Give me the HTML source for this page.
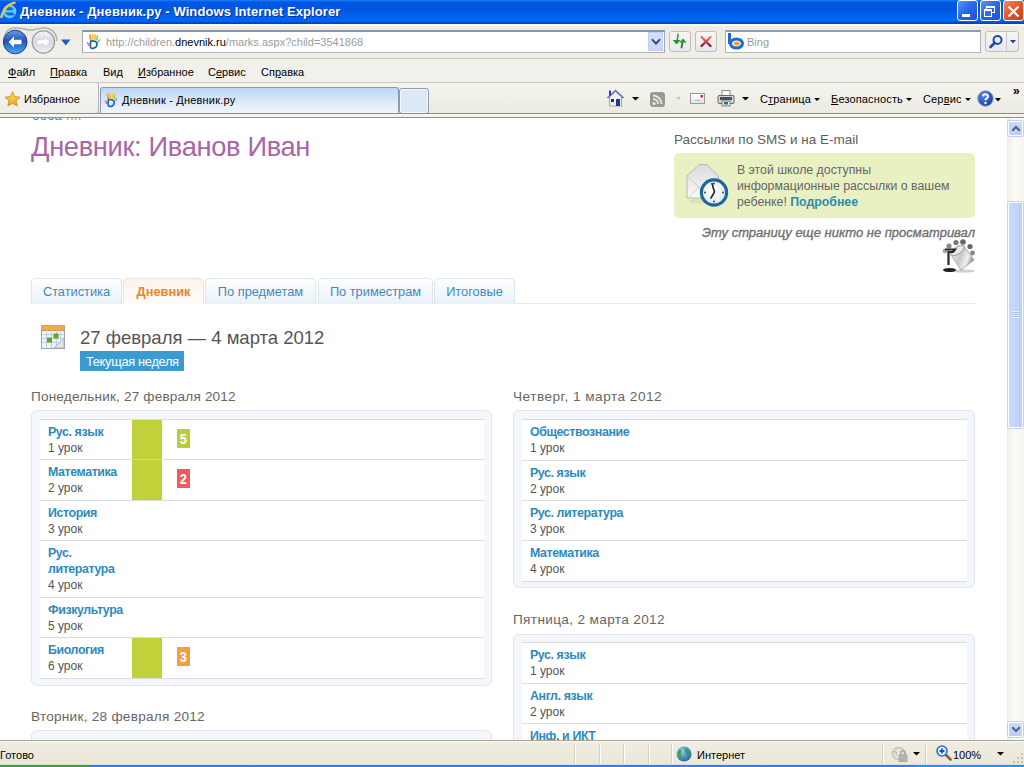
<!DOCTYPE html>
<html><head><meta charset="utf-8">
<style>
*{box-sizing:border-box}
html,body{margin:0;padding:0}
body{width:1024px;height:767px;overflow:hidden;position:relative;background:#fff;font-family:"Liberation Sans",sans-serif}
.a{position:absolute}
/* chrome */
#title{left:0;top:0;width:1024px;height:24px;background:linear-gradient(#0b5ce8,#0a58e6 60%,#0650dc);}
#tt{left:20px;top:4px;color:#fff;font-weight:bold;font-size:13px;white-space:nowrap;text-shadow:1px 1px 0 #0a2a8a}
#addr{left:0;top:24px;width:1024px;height:34px;background:#f4f4f0;border-top:1px solid #d8e4f8}
#menu{left:0;top:58px;width:1024px;height:24px;background:#efede4;border-top:1px solid #c9c7bb}
#tabs{left:0;top:82px;width:1024px;height:36px;background:linear-gradient(#f3f2ea,#ebe9de);border-top:1px solid #d0cec2}
.mi{top:66px;font-size:11px;color:#000;white-space:nowrap}
.u{text-decoration:underline}
.tbtn{top:0;width:21px;height:21px;border:1px solid #fff;border-radius:3px;background:linear-gradient(135deg,#5d96f6,#2b68e8 45%,#1e54d8)}
.sbtn{top:31px;height:21px;border:1px solid #c2c0b6;border-radius:3px;background:linear-gradient(#f6f6f2,#e6e8ee)}
.cm{top:93px;font-size:11px;white-space:nowrap;letter-spacing:0.15px}
.st{top:749px;font-size:11px;white-space:nowrap}
.vsep{top:744px;width:2px;height:20px;border-left:1px solid #d6d2bf;border-right:1px solid #fff}
.sarr{width:15px;height:15px;border:1px solid #fff;border-radius:2px;background:linear-gradient(#cad9fc,#bccdf8);box-shadow:0 0 0 1px #c2d0f0}
#status{left:0;top:740px;width:1024px;height:27px;background:#ece9d8;border-top:1px solid #aca899}
#content{left:0;top:118px;width:1007px;height:622px;background:#fff;overflow:hidden}
#sb{left:1007px;top:118px;width:17px;height:622px;background:#f7f6f1;border-left:1px solid #eeede5}
.lnk{color:#2a8cb2;font-weight:bold}
.gr{color:#5a5a5a}
.tab{top:278px;height:26px;border:1px solid #dbe6ee;border-bottom:none;border-radius:5px 5px 0 0;background:linear-gradient(#fdfeff,#e9f2f8);color:#4289bb;font-size:12.8px;text-align:center;line-height:26px;white-space:nowrap}
.tab.act{background:linear-gradient(#fdf2ea,#fffbf8);border-color:#f0e3da;color:#e8862c;font-weight:bold}
.dh{font-size:13.6px;color:#666;white-space:nowrap;letter-spacing:0.25px}
.pnl{background:#f3f6fa;border:1px solid #e1e6ee;border-radius:6px}
.sep{height:1px;background:#dcdcdc}
.gcol{width:30px;background:#c1d13a}
.badge{width:13px;height:19px;color:#fff;font-weight:bold;font-size:15.5px;line-height:20px;text-align:center;letter-spacing:0}
.badge span{display:inline-block;transform:scaleX(0.82)}
.subj{color:#2d8bbb;font-weight:bold;font-size:12.4px;letter-spacing:-0.4px;white-space:nowrap}
.les{color:#555;font-size:12px;white-space:nowrap}
</style></head><body>

<!--CHROME-->
<!-- title bar -->
<div class="a" style="left:0;top:0;width:1024px;height:24px;background:linear-gradient(#1a82fa 0,#0058e4 2px,#0055e0 9px,#0062ee 16px,#0066f2 21px,#0048cc 23px,#003cb8 24px)"></div>
<svg class="a" style="left:0;top:0" width="18" height="22" viewBox="0 0 18 22">
  <circle cx="9.5" cy="11.3" r="5.6" fill="#1a70c8" stroke="#5ccaf8" stroke-width="2.6"/>
  <path d="M4.5 11.3h10" stroke="#5ccaf8" stroke-width="2.2"/>
  <path d="M10 14.5h4.5" stroke="#0a5ae6" stroke-width="1.4"/>
  <path d="M1.2 18 C2.5 10 8.5 3 15.5 2.6" fill="none" stroke="#e6c650" stroke-width="2.4"/>
</svg>
<div class="a" style="left:20px;top:4px;color:#fff;font-weight:bold;font-size:13px;letter-spacing:0.1px;white-space:nowrap;text-shadow:1px 1px 0 #0b2f9a">Дневник - Дневник.ру - Windows Internet Explorer</div>
<!-- title buttons -->
<div class="a tbtn" style="left:957px"><div class="a" style="left:4px;top:13px;width:8px;height:3px;background:#fff"></div></div>
<div class="a tbtn" style="left:980px">
  <div class="a" style="left:5px;top:5px;width:9px;height:7px;border:1px solid #fff;border-top-width:2px"></div>
  <div class="a" style="left:3px;top:8px;width:8px;height:8px;border:1px solid #fff;border-top-width:2px;background:#2f6ee8"></div>
</div>
<div class="a tbtn" style="left:1003px;width:21px;background:linear-gradient(135deg,#f08a6a,#e35a30 45%,#c8401c)">
  <svg class="a" style="left:3px;top:4px" width="13" height="13"><path d="M1.5 1.5L11.5 11.5M11.5 1.5L1.5 11.5" stroke="#fff" stroke-width="2.2"/></svg>
</div>

<!-- address row -->
<div class="a" style="left:0;top:24px;width:1024px;height:34px;background:linear-gradient(#f6fafe 0,#f6fafe 1.5px,#efebe2 2.5px,#eeebe3 6px,#f0efe9 28px,#eeede7 34px)"></div>

<svg class="a" style="left:2px;top:26px" width="58" height="31" viewBox="0 0 58 31">
  <defs>
    <linearGradient id="gb" x1="0" y1="0" x2="0" y2="1"><stop offset="0" stop-color="#6a9be8"/><stop offset="0.45" stop-color="#2452b8"/><stop offset="1" stop-color="#45b0f0"/></linearGradient>
    <linearGradient id="gf" x1="0" y1="0" x2="0" y2="1"><stop offset="0" stop-color="#f4f6f9"/><stop offset="0.5" stop-color="#d4d9e0"/><stop offset="1" stop-color="#eef3f7"/></linearGradient>
  </defs>
  <path d="M2 15 C2 6 7 2 13 2 C20 2 24 4 29 4 C34 4 37 2 42 2 C50 2 55 8 55 15" fill="none" stroke="#b4b4b4" stroke-width="1.6"/>
  <circle cx="13.2" cy="16" r="11.8" fill="url(#gb)" stroke="#1a3f8f" stroke-width="1"/>
  <path d="M6.5 16 L12 10.5 L12 13.8 L19.5 13.8 L19.5 18.2 L12 18.2 L12 21.5 Z" fill="#fff"/>
  <circle cx="41.4" cy="16" r="11.2" fill="url(#gf)" stroke="#9a9a9a" stroke-width="1.2"/>
  <path d="M48 16 L42.5 10.5 L42.5 13.8 L35 13.8 L35 18.2 L42.5 18.2 L42.5 21.5 Z" fill="#fff" stroke="#c8ccd2" stroke-width="0.6"/>
</svg>
<svg class="a" style="left:60px;top:38px" width="12" height="9"><path d="M1 1.5h9.5L5.75 7.5z" fill="#1d5ec8"/></svg>

<div class="a" style="left:82px;top:30px;width:583px;height:23px;background:#fff;border:1px solid #9aaabb;border-top:2px solid #8496ae;border-bottom-color:#b4b4ac"></div>
<svg class="a" style="left:86px;top:33px" width="15" height="17" viewBox="0 0 17 19">
  <path d="M5 7.5 L4.5 2.5" stroke="#f2a040" stroke-width="2.2" stroke-linecap="round"/>
  <path d="M7.5 7 L7.5 1.5" stroke="#f6c840" stroke-width="2.2" stroke-linecap="round"/>
  <path d="M10 7 L10.5 2" stroke="#e8d040" stroke-width="2.2" stroke-linecap="round"/>
  <path d="M12.3 7.5 L13 3.5" stroke="#a8d040" stroke-width="2" stroke-linecap="round"/>
  <path d="M14 10 L15.5 7.5" stroke="#60c0c8" stroke-width="1.8" stroke-linecap="round"/>
  <path d="M1.8 11 L3.2 13.5" stroke="#e070b0" stroke-width="2" stroke-linecap="round"/>
  <path d="M5.5 9 C9 8.5 13 9.5 12.5 13 C12 16.5 8.5 18 6 17 C4 16 5 12 5.5 9 Z" fill="none" stroke="#1f62ad" stroke-width="2"/>
</svg>
<div class="a" style="left:106px;top:36px;font-size:11px;color:#9c9c9c;white-space:nowrap">http://children.<span style="color:#000">dnevnik.ru</span>/marks.aspx?child=3541868</div>
<div class="a" style="left:648px;top:32px;width:15px;height:19px;background:linear-gradient(#d6e0fb,#c8d5f7);border:1px solid #c0cff2"></div>
<svg class="a" style="left:651px;top:38px" width="10" height="8"><path d="M1.5 1.8L5 5.5L8.5 1.8" fill="none" stroke="#34466e" stroke-width="1.9" stroke-linecap="round"/></svg>

<div class="a sbtn" style="left:669px;width:22px"></div>
<svg class="a" style="left:669px;top:30px" width="22" height="22" viewBox="0 0 22 22">
  <path d="M9 4.5 L8.2 10.5" stroke="#4a9a4a" stroke-width="1.8" stroke-linecap="round"/>
  <path d="M3.8 10 L11.5 10 L7.5 14.5 Z" fill="#2f8f2f"/>
  <path d="M12.5 17.5 L13.6 12" stroke="#2a7a2a" stroke-width="1.8" stroke-linecap="round"/>
  <path d="M10 12.5 L17.5 12.5 L14.2 8.5 Z" fill="#2f8f2f"/>
</svg>
<div class="a sbtn" style="left:695px;width:22px"></div>
<svg class="a" style="left:699px;top:35px" width="14" height="13"><defs><linearGradient id="gx" x1="0" y1="0" x2="0" y2="1"><stop offset="0" stop-color="#f07878"/><stop offset="1" stop-color="#8a1a2a"/></linearGradient></defs><path d="M2.5 2L11.5 11M11.5 2L2.5 11" stroke="url(#gx)" stroke-width="2.4" stroke-linecap="round"/></svg>

<div class="a" style="left:725px;top:30px;width:256px;height:23px;background:#fff;border:1px solid #a9b4c2;border-top:2px solid #8f9db0;border-bottom-color:#b8b8b0"></div>
<svg class="a" style="left:727px;top:32px" width="18" height="18" viewBox="0 0 18 18">
  <path d="M2.5 1 V12" stroke="#1a6cd0" stroke-width="3"/>
  <ellipse cx="9.5" cy="11.5" rx="6" ry="4.6" fill="none" stroke="#1a6cd0" stroke-width="3"/>
  <ellipse cx="9.8" cy="11.5" rx="3" ry="2" fill="#f5a020"/>
</svg>
<div class="a" style="left:747px;top:36px;font-size:11px;color:#9a9a9a">Bing</div>
<div class="a sbtn" style="left:985px;width:34px;border-radius:3px"></div>
<div class="a" style="left:1006px;top:32px;width:1px;height:19px;background:#c8c8c0"></div>
<svg class="a" style="left:988px;top:34px" width="16" height="16" viewBox="0 0 16 16"><circle cx="9.5" cy="6" r="4" fill="none" stroke="#1c4ab0" stroke-width="2"/><path d="M6.8 8.8 L2.5 13" stroke="#1c4ab0" stroke-width="2.6" stroke-linecap="round"/></svg>
<svg class="a" style="left:1010px;top:40px" width="6" height="4"><path d="M0 0h6L3 3.5z" fill="#2a3f90"/></svg>

<!-- menu -->
<div class="a" style="left:0;top:58px;width:1024px;height:24px;background:#f1f0ea;border-top:1px solid #c6c4b9"></div>
<div class="a" style="left:0;top:82px;width:1024px;height:1px;background:#cdcbbf"></div>
<div class="a mi" style="left:8px"><span class="u">Ф</span>айл</div>
<div class="a mi" style="left:50px"><span class="u">П</span>равка</div>
<div class="a mi" style="left:103px">Ви<span class="u">д</span></div>
<div class="a mi" style="left:138px"><span class="u">И</span>збранное</div>
<div class="a mi" style="left:208px">С<span class="u">е</span>рвис</div>
<div class="a mi" style="left:261px">Сп<span class="u">р</span>авка</div>

<!-- favorites/tabs -->
<div class="a" style="left:0;top:83px;width:1024px;height:30px;background:linear-gradient(#f4f3ed,#ecebe2)"></div>
<div class="a" style="left:-4px;top:82px;width:103px;height:32px;background:linear-gradient(#f6f6f3,#eeede8);border:1px solid #b7b6ae;border-top-color:#cdcbbf;border-radius:0 3px 3px 0"></div>
<svg class="a" style="left:4px;top:91px" width="17" height="17" viewBox="0 0 17 17">
  <defs><linearGradient id="gs" x1="0" y1="0" x2="0" y2="1"><stop offset="0" stop-color="#ffe27a"/><stop offset="1" stop-color="#f0a010"/></linearGradient></defs>
  <path d="M8.5 0.8 L10.7 5.6 L16 6.2 L12 9.7 L13.2 15 L8.5 12.3 L3.8 15 L5 9.7 L1 6.2 L6.3 5.6 Z" fill="url(#gs)" stroke="#c88a10" stroke-width="0.8"/>
</svg>
<div class="a" style="left:24px;top:93px;font-size:11px;white-space:nowrap">Избранное</div>
<div class="a" style="left:100px;top:87px;width:299px;height:27px;border:1px solid #8c9aab;border-bottom:none;border-radius:3px 3px 0 0;background:linear-gradient(#bcd6f7,#dbe8f8 50%,#f3f6fb)"></div>
<svg class="a" style="left:104px;top:92px" width="14" height="16" viewBox="0 0 17 19">
  <path d="M5 7.5 L4.5 2.5" stroke="#f2a040" stroke-width="2.2" stroke-linecap="round"/>
  <path d="M7.5 7 L7.5 1.5" stroke="#f6c840" stroke-width="2.2" stroke-linecap="round"/>
  <path d="M10 7 L10.5 2" stroke="#e8d040" stroke-width="2.2" stroke-linecap="round"/>
  <path d="M12.3 7.5 L13 3.5" stroke="#a8d040" stroke-width="2" stroke-linecap="round"/>
  <path d="M14 10 L15.5 7.5" stroke="#60c0c8" stroke-width="1.8" stroke-linecap="round"/>
  <path d="M1.8 11 L3.2 13.5" stroke="#e070b0" stroke-width="2" stroke-linecap="round"/>
  <path d="M5.5 9 C9 8.5 13 9.5 12.5 13 C12 16.5 8.5 18 6 17 C4 16 5 12 5.5 9 Z" fill="none" stroke="#1f62ad" stroke-width="2"/>
</svg>
<div class="a" style="left:122px;top:94px;font-size:11px;letter-spacing:0.2px;white-space:nowrap">Дневник - Дневник.ру</div>
<div class="a" style="left:399px;top:88px;width:30px;height:26px;border:1px solid #8c9aab;border-radius:3px;background:#dce8f6;box-shadow:inset 0 0 0 1px #f4f8fc"></div>
<!-- command bar -->
<svg class="a" style="left:606px;top:89px" width="19" height="18" viewBox="0 0 19 18">
  <path d="M1.5 9 L9.5 1.5 L17.5 9" fill="none" stroke="#5a74b8" stroke-width="1.6"/>
  <path d="M3.5 8 L9.5 2.8 L15.5 8 V17 H3.5 Z" fill="#f0f0f4" stroke="#8a90a0" stroke-width="0.8"/>
  <rect x="10" y="10" width="4" height="7" fill="#1e3f88"/>
  <rect x="5" y="10" width="3" height="3" fill="#333"/>
  <rect x="3" y="1.5" width="2" height="5" fill="#3a3ab8"/>
</svg>
<svg class="a" style="left:632px;top:97px" width="7" height="4"><path d="M0 0h7L3.5 3.5z" fill="#000"/></svg>
<div class="a" style="left:650px;top:92px;width:15px;height:15px;background:#9a9a94;border-radius:3px"></div>
<svg class="a" style="left:650px;top:92px" width="15" height="15"><circle cx="4" cy="11.5" r="1.6" fill="#e8e8e4"/><path d="M3 7 A5 5 0 0 1 8 12" fill="none" stroke="#e8e8e4" stroke-width="1.8"/><path d="M3 3.5 A8.5 8.5 0 0 1 11.5 12" fill="none" stroke="#e8e8e4" stroke-width="1.8"/></svg>
<svg class="a" style="left:676px;top:97px" width="5" height="3"><path d="M0 0h5L2.5 3z" fill="#c4c4bc"/></svg>
<div class="a" style="left:690px;top:93px;width:15px;height:11px;background:linear-gradient(#fff,#e4e4e4);border:1px solid #9a9a9a"></div>
<svg class="a" style="left:690px;top:93px" width="15" height="11"><rect x="10.5" y="2" width="2.5" height="2.5" fill="#b03040"/><path d="M5 7.5h5" stroke="#a0a8b0" stroke-width="0.8"/></svg>
<svg class="a" style="left:717px;top:89px" width="18" height="18" viewBox="0 0 18 18">
  <rect x="5" y="1.5" width="8" height="6" fill="#fff" stroke="#8a8a8a" stroke-width="1"/>
  <rect x="1" y="6.5" width="16" height="8" rx="1" fill="#d4d4d4" stroke="#6a6a6a" stroke-width="1"/>
  <rect x="3" y="8" width="12" height="3" fill="#4a5058"/>
  <rect x="5" y="12" width="8" height="5" fill="#dff2f4" stroke="#507070" stroke-width="0.8"/>
  <rect x="7" y="13" width="4" height="2.5" fill="#3a6a70"/>
</svg>
<svg class="a" style="left:742px;top:97px" width="7" height="4"><path d="M0 0h7L3.5 3.5z" fill="#000"/></svg>
<div class="a cm" style="left:760px">С<span class="u">т</span>раница</div>
<svg class="a" style="left:814px;top:98px" width="6" height="4"><path d="M0 0h6L3 3z" fill="#000"/></svg>
<div class="a cm" style="left:831px"><span class="u">Б</span>езопасность</div>
<svg class="a" style="left:906px;top:98px" width="6" height="4"><path d="M0 0h6L3 3z" fill="#000"/></svg>
<div class="a cm" style="left:923px">Сер<span class="u">в</span>ис</div>
<svg class="a" style="left:965px;top:98px" width="6" height="4"><path d="M0 0h6L3 3z" fill="#000"/></svg>
<svg class="a" style="left:977px;top:90px" width="17" height="17" viewBox="0 0 17 17">
  <defs><radialGradient id="gh" cx="0.4" cy="0.35" r="0.7"><stop offset="0" stop-color="#5a8ae8"/><stop offset="1" stop-color="#1a3a9a"/></radialGradient></defs>
  <circle cx="8.5" cy="8.5" r="7.8" fill="url(#gh)" stroke="#9aaad0" stroke-width="1"/>
  <path d="M6 6.3 C6 3.8 11 3.6 11 6.4 C11 8.3 8.5 8.2 8.5 10.3" fill="none" stroke="#fff" stroke-width="2"/>
  <circle cx="8.5" cy="13" r="1.2" fill="#fff"/>
</svg>
<svg class="a" style="left:995px;top:98px" width="6" height="4"><path d="M0 0h6L3 3.5z" fill="#000"/></svg>
<div class="a" style="left:1013px;top:84px;font-size:12px;font-weight:bold;letter-spacing:-1px">»</div>

<div class="a" style="left:0;top:113px;width:1024px;height:1px;background:#8e8e88"></div>
<div class="a" style="left:0;top:114px;width:1024px;height:4px;background:#f4f4f0"></div>
<div class="a" style="left:0;top:117px;width:1024px;height:1px;background:#909089"></div>

<!-- scrollbar -->
<div class="a" style="left:1007px;top:118px;width:17px;height:622px;background:linear-gradient(90deg,#f1f0ea,#fbfbf8 40%,#f6f5f0);border-left:1px solid #ecebe4"></div>
<div class="a sarr" style="left:1008px;top:121px"></div>
<svg class="a" style="left:1011px;top:125px" width="10" height="7"><path d="M1.2 5.8L5 2L8.8 5.8" fill="none" stroke="#4d6185" stroke-width="2"/></svg>
<div class="a" style="left:1008px;top:202px;width:15px;height:226px;border:1px solid #fbfdff;border-radius:2px;background:linear-gradient(90deg,#cad8fc,#c3d3fb 60%,#bccdf6);box-shadow:0 0 0 1px #c6d3ee"></div>
<svg class="a" style="left:1011px;top:310px" width="9" height="9"><path d="M1 1.5h7M1 3.5h7M1 5.5h7M1 7.5h7" stroke="#eef3fe" stroke-width="1"/><path d="M1 2.5h7M1 4.5h7M1 6.5h7" stroke="#a8bbe6" stroke-width="1"/></svg>
<div class="a sarr" style="left:1008px;top:722px"></div>
<svg class="a" style="left:1011px;top:726px" width="10" height="7"><path d="M1.2 1.2L5 5L8.8 1.2" fill="none" stroke="#4d6185" stroke-width="2"/></svg>

<!--/CHROME-->

<!-- page -->
<div id="page" class="a" style="left:0;top:0;width:1007px;height:740px;overflow:hidden;clip-path:inset(118px 0 0 0)">
<div class="a" style="left:31px;top:131px;font-size:27.3px;letter-spacing:-0.35px;color:#a866a4;white-space:nowrap">Дневник: Иванов Иван</div>
<div class="a" style="left:32px;top:108px;font-size:13px;white-space:nowrap;letter-spacing:0.5px"><span style="color:#2d8bbb">ооса</span> <span style="color:#999">нн</span></div>

<div class="a" style="left:674px;top:132px;font-size:13.5px;color:#5e5e5e;white-space:nowrap">Рассылки по SMS и на E-mail</div>
<div class="a" style="left:674px;top:153px;width:301px;height:65px;background:#e9f1c3;border-radius:5px"></div>
<div class="a" style="left:737px;top:162px;font-size:12.3px;line-height:16px;color:#666;white-space:nowrap">В этой школе доступны<br>информационные рассылки о вашем<br>ребенке! <span class="lnk">Подробнее</span></div>
<div class="a" style="left:702px;top:225px;font-size:13px;font-style:italic;color:#6f6f6f;white-space:nowrap;-webkit-text-stroke:0.35px #6f6f6f">Эту страницу еще никто не просматривал</div>

<!-- envelope+clock -->
<svg class="a" style="left:684px;top:162px" width="48" height="48" viewBox="0 0 48 48">
  <defs>
    <linearGradient id="ge" x1="0" y1="0" x2="0" y2="1"><stop offset="0" stop-color="#dcdcdc"/><stop offset="1" stop-color="#f8f8f8"/></linearGradient>
    <radialGradient id="gc" cx="0.45" cy="0.4" r="0.6"><stop offset="0" stop-color="#ffffff"/><stop offset="1" stop-color="#dfe8f0"/></radialGradient>
  </defs>
  <ellipse cx="22" cy="39" rx="17" ry="3" fill="#d8dcb0" opacity="0.8"/>
  <path d="M3 14 L15 2.5 L23 2.5 L34.5 14 V36 H3 Z" fill="url(#ge)" stroke="#b8b8b8" stroke-width="1"/>
  <path d="M4 15 L19 29 L34 15" fill="none" stroke="#c8c8c8" stroke-width="1"/>
  <path d="M4.5 35 L16 24" stroke="#d6d6d6" stroke-width="1"/>
  <circle cx="30" cy="30.5" r="12.6" fill="url(#gc)" stroke="#1b689e" stroke-width="3.2"/>
  <path d="M28 21.5 L30.5 30 L27 36" fill="none" stroke="#222" stroke-width="1.6" stroke-linecap="round"/>
  <circle cx="30" cy="21.5" r="0.9" fill="#333"/><circle cx="30" cy="39.5" r="0.9" fill="#333"/>
  <circle cx="21" cy="30.5" r="0.9" fill="#333"/><circle cx="39" cy="30.5" r="0.9" fill="#333"/>
</svg>
<!-- paint bucket -->
<svg class="a" style="left:941px;top:238px" width="36" height="36" viewBox="0 0 36 36">
  <defs><linearGradient id="gk" x1="0" y1="0" x2="1" y2="0.4"><stop offset="0" stop-color="#f4f4f4"/><stop offset="0.5" stop-color="#c8c8c8"/><stop offset="0.8" stop-color="#f0f0f0"/><stop offset="1" stop-color="#9a9a9a"/></linearGradient></defs>
  <ellipse cx="22" cy="33" rx="12" ry="1.6" fill="#d0d0d0"/>
  <circle cx="8" cy="8" r="2.6" fill="#888"/><circle cx="15" cy="4.5" r="2.6" fill="#777"/><circle cx="22" cy="4" r="2.8" fill="#666"/>
  <circle cx="29" cy="8.5" r="2.6" fill="#666"/><circle cx="31.5" cy="15" r="2.4" fill="#888"/><circle cx="4" cy="13" r="2.4" fill="#aaa"/>
  <path d="M10 17 L23 8 L33 22 L20 32 Z" fill="url(#gk)" stroke="#9a9a9a" stroke-width="0.8"/>
  <ellipse cx="16.5" cy="12.5" rx="7.8" ry="3.4" transform="rotate(-35 16.5 12.5)" fill="#e8e8e8" stroke="#888" stroke-width="0.8"/>
  <path d="M4 11.5 H14 L12 14 H7.5 V27" fill="none" stroke="#2a2a2a" stroke-width="2.2"/>
  <ellipse cx="8.5" cy="32" rx="6.5" ry="2" fill="#222"/>
</svg>
<!-- calendar -->
<svg class="a" style="left:41px;top:325px" width="24" height="24" viewBox="0 0 24 24">
  <rect x="0.5" y="0.5" width="23" height="23" fill="#eef3fa" stroke="#9aa4b0" stroke-width="1"/>
  <rect x="0.5" y="0.5" width="23" height="4.5" fill="#f4a850"/>
  <path d="M1 5.5H23" stroke="#d88a30" stroke-width="1"/>
  <g stroke="#c4cedc" stroke-width="1"><path d="M1 9.5H23M1 13.5H23M1 17.5H23M5.5 5V23M10.5 5V23M15.5 5V23M19.5 5V23"/></g>
  <rect x="6" y="12.5" width="5" height="5" fill="#5aa820"/>
  <rect x="12.5" y="8.5" width="5" height="5" fill="#5aa820"/>
  <path d="M13 23 L23 13 V23 Z" fill="#dfe4ee" stroke="#a0a8b8" stroke-width="0.8"/>
</svg>

<!-- tabs -->
<div class="a" style="left:31px;top:303px;width:944px;height:1px;background:#e3ebf1"></div>
<div class="a tab" style="left:31px;width:91px">Статистика</div>
<div class="a tab act" style="left:123px;width:81px">Дневник</div>
<div class="a tab" style="left:205px;width:111px">По предметам</div>
<div class="a tab" style="left:318px;width:115px">По триместрам</div>
<div class="a tab" style="left:434px;width:81px">Итоговые</div>

<div class="a" style="left:80px;top:327px;font-size:18.5px;color:#555;white-space:nowrap">27 февраля — 4 марта 2012</div>
<div class="a" style="left:80px;top:351px;width:104px;height:20px;background:#3a9bd0;color:#fff;font-size:12.8px;letter-spacing:-0.3px;line-height:21px;padding-left:6px;white-space:nowrap">Текущая неделя</div>

<div class="a dh" style="left:31px;top:389px;letter-spacing:0.17px">Понедельник, 27 февраля 2012</div>
<div class="a dh" style="left:513px;top:389px;letter-spacing:0.5px">Четверг, 1 марта 2012</div>
<div class="a dh" style="left:513px;top:612px;letter-spacing:0.35px">Пятница, 2 марта 2012</div>
<div class="a dh" style="left:31px;top:709px;letter-spacing:0.26px">Вторник, 28 февраля 2012</div>

<!--PANELS-->
<div class="a pnl" style="left:31px;top:410px;width:461px;height:276px"></div>
<div class="a" style="left:40px;top:419px;width:444px;height:260px;background:#fff"></div>
<div class="a gcol" style="left:132px;top:419px;height:41px"></div>
<div class="a badge" style="left:177px;top:429px;background:#b9cc3c"><span>5</span></div>
<div class="a subj" style="left:48px;top:425px">Рус. язык</div>
<div class="a les" style="left:48px;top:441px">1 урок</div>
<div class="a gcol" style="left:132px;top:459px;height:42px"></div>
<div class="a badge" style="left:177px;top:469px;background:#ee5b5b"><span>2</span></div>
<div class="a subj" style="left:48px;top:465px">Математика</div>
<div class="a les" style="left:48px;top:481px">2 урок</div>
<div class="a subj" style="left:48px;top:506px">История</div>
<div class="a les" style="left:48px;top:522px">3 урок</div>
<div class="a subj" style="left:48px;top:546px">Рус.</div>
<div class="a subj" style="left:48px;top:562px">литература</div>
<div class="a les" style="left:48px;top:578px">4 урок</div>
<div class="a subj" style="left:48px;top:603px">Физкультура</div>
<div class="a les" style="left:48px;top:619px">5 урок</div>
<div class="a gcol" style="left:132px;top:637px;height:42px"></div>
<div class="a badge" style="left:177px;top:647px;background:#f0a040"><span>3</span></div>
<div class="a subj" style="left:48px;top:643px">Биология</div>
<div class="a les" style="left:48px;top:659px">6 урок</div>
<div class="a sep" style="left:40px;top:419px;width:444px"></div>
<div class="a sep" style="left:40px;top:459px;width:444px"></div>
<div class="a sep" style="left:40px;top:500px;width:444px"></div>
<div class="a sep" style="left:40px;top:540px;width:444px"></div>
<div class="a sep" style="left:40px;top:597px;width:444px"></div>
<div class="a sep" style="left:40px;top:637px;width:444px"></div>
<div class="a sep" style="left:40px;top:678px;width:444px"></div>
<div class="a" style="left:132px;top:459px;width:30px;height:1px;background:#d6df86"></div>
<div class="a pnl" style="left:513px;top:410px;width:462px;height:178px"></div>
<div class="a" style="left:522px;top:419px;width:445px;height:163px;background:#fff"></div>
<div class="a subj" style="left:530px;top:425px">Обществознание</div>
<div class="a les" style="left:530px;top:441px">1 урок</div>
<div class="a subj" style="left:530px;top:466px">Рус. язык</div>
<div class="a les" style="left:530px;top:482px">2 урок</div>
<div class="a subj" style="left:530px;top:506px">Рус. литература</div>
<div class="a les" style="left:530px;top:522px">3 урок</div>
<div class="a subj" style="left:530px;top:546px">Математика</div>
<div class="a les" style="left:530px;top:562px">4 урок</div>
<div class="a sep" style="left:522px;top:419px;width:445px"></div>
<div class="a sep" style="left:522px;top:460px;width:445px"></div>
<div class="a sep" style="left:522px;top:500px;width:445px"></div>
<div class="a sep" style="left:522px;top:540px;width:445px"></div>
<div class="a sep" style="left:522px;top:581px;width:445px"></div>
<div class="a pnl" style="left:513px;top:634px;width:462px;height:166px"></div>
<div class="a" style="left:522px;top:642px;width:445px;height:123px;background:#fff"></div>
<div class="a subj" style="left:530px;top:648px">Рус. язык</div>
<div class="a les" style="left:530px;top:664px">1 урок</div>
<div class="a subj" style="left:530px;top:689px">Англ. язык</div>
<div class="a les" style="left:530px;top:705px">2 урок</div>
<div class="a subj" style="left:530px;top:729px">Инф. и ИКТ</div>
<div class="a les" style="left:530px;top:745px">3 урок</div>
<div class="a sep" style="left:522px;top:642px;width:445px"></div>
<div class="a sep" style="left:522px;top:683px;width:445px"></div>
<div class="a sep" style="left:522px;top:723px;width:445px"></div>
<div class="a sep" style="left:522px;top:764px;width:445px"></div>
<div class="a pnl" style="left:31px;top:730px;width:461px;height:70px"></div>
<div class="a" style="left:40px;top:742px;width:444px;height:42px;background:#fff"></div>
<div class="a subj" style="left:48px;top:748px">Рус. язык</div>
<div class="a les" style="left:48px;top:764px">1 урок</div>
<div class="a sep" style="left:40px;top:742px;width:444px"></div>
<div class="a sep" style="left:40px;top:783px;width:444px"></div>
<!--/PANELS-->
</div>

<!-- status bar -->
<div class="a" style="left:0;top:740px;width:1024px;height:27px;background:linear-gradient(#efede2,#ebe8d8);border-top:1px solid #a8a597"></div>
<div class="a" style="left:0;top:741px;width:1024px;height:1px;background:#fbfaf5"></div>
<div class="a st" style="left:0">Готово</div>
<div class="a vsep" style="left:574px"></div>
<div class="a vsep" style="left:599px"></div>
<div class="a vsep" style="left:623px"></div>
<div class="a vsep" style="left:648px"></div>
<div class="a vsep" style="left:671px"></div>
<svg class="a" style="left:676px;top:746px" width="16" height="16" viewBox="0 0 16 16">
  <defs><radialGradient id="gg" cx="0.35" cy="0.3" r="0.8"><stop offset="0" stop-color="#8ad0f8"/><stop offset="1" stop-color="#1a5aa8"/></radialGradient></defs>
  <circle cx="8" cy="8" r="7.5" fill="url(#gg)"/>
  <path d="M3 4 C5 3 6 5 5 7 C4 9 6 10 6 13 C4 12 2 10 2 7 Z" fill="#3aa040"/>
  <path d="M9 2 C12 3 14 6 13 9 C11 9 10 7 9 6 Z M9 11 C11 11 12 12 11 14 C9 14 9 12 9 11Z" fill="#3aa040"/>
</svg>
<div class="a st" style="left:697px">Интернет</div>
<div class="a vsep" style="left:882px"></div>
<svg class="a" style="left:891px;top:746px" width="18" height="16" viewBox="0 0 18 16">
  <circle cx="7.5" cy="7.5" r="6" fill="#e4e2da" stroke="#c4c4c0" stroke-width="1.6"/>
  <path d="M3 6 C5 5 6 7 5 9" fill="none" stroke="#b8b8b4" stroke-width="1.2"/>
  <rect x="8" y="9" width="8" height="6.5" fill="#b4b4b0" stroke="#9a9a96" stroke-width="0.7"/>
  <path d="M9.8 9 V7 A2.2 2.2 0 0 1 14.2 7 V9" fill="none" stroke="#9a9a96" stroke-width="1.1"/>
</svg>
<svg class="a" style="left:913px;top:752px" width="7" height="4"><path d="M0 0h7L3.5 3.5z" fill="#000"/></svg>
<div class="a vsep" style="left:925px"></div>
<svg class="a" style="left:936px;top:745px" width="16" height="16" viewBox="0 0 16 16">
  <path d="M9 9 L14.5 14.5" stroke="#8a6030" stroke-width="2.6" stroke-linecap="round"/>
  <circle cx="6" cy="6" r="5" fill="#eaf4fc" stroke="#2a70c8" stroke-width="1.6"/>
  <path d="M3.5 6h5M6 3.5v5" stroke="#1a50b0" stroke-width="1.8"/>
</svg>
<div class="a st" style="left:953px">100%</div>
<svg class="a" style="left:997px;top:752px" width="7" height="4"><path d="M0 0h7L3.5 3.5z" fill="#000"/></svg>
<svg class="a" style="left:1012px;top:752px" width="12" height="12"><g fill="#c4c2b4"><rect x="9" y="1" width="2" height="2"/><rect x="5" y="5" width="2" height="2"/><rect x="9" y="5" width="2" height="2"/><rect x="1" y="9" width="2" height="2"/><rect x="5" y="9" width="2" height="2"/><rect x="9" y="9" width="2" height="2"/></g></svg>
<div class="a" style="left:0;top:764px;width:90px;height:1px;background:#cfe4c8"></div>
<div class="a" style="left:0;top:765px;width:90px;height:2px;background:#3f9c3f"></div>
<div class="a" style="left:90px;top:764px;width:934px;height:1px;background:#d2dcea"></div>
<div class="a" style="left:90px;top:765px;width:825px;height:2px;background:#3a7ee0"></div>
<div class="a" style="left:915px;top:765px;width:109px;height:2px;background:#1a9ae8"></div>
</body></html>
